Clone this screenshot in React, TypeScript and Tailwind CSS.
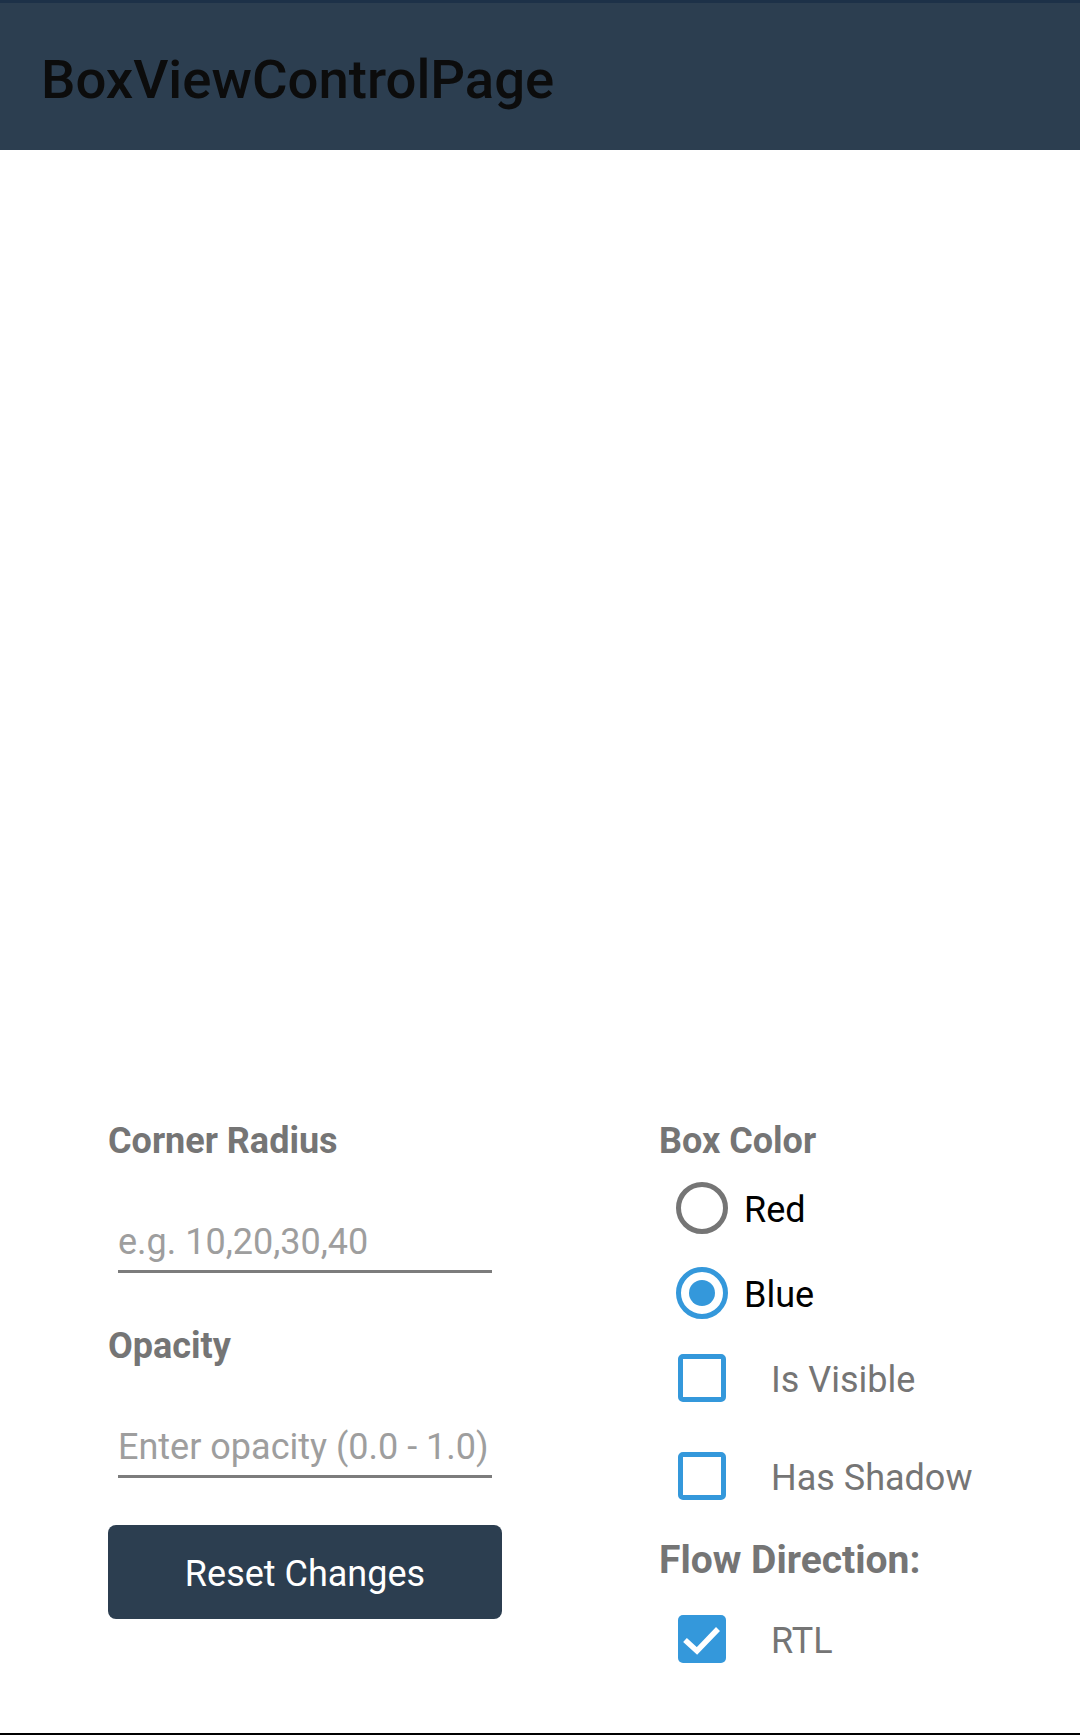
import { useState } from 'react'

// Outline / filled radio circle
function Radio({ checked }: { checked: boolean }) {
  return (
    <span
      className={`flex h-[52px] w-[52px] flex-none items-center justify-center rounded-full border-[5px] ${
        checked ? 'border-[#3498db]' : 'border-[#757575]'
      }`}
    >
      {checked && <span className="h-[26px] w-[26px] rounded-full bg-[#3498db]" />}
    </span>
  )
}

function Check({ checked }: { checked: boolean }) {
  if (checked) {
    return (
      <span className="flex h-[48px] w-[48px] flex-none items-center justify-center rounded-[5px] bg-[#3498db]">
        <svg viewBox="0 0 48 48" className="h-[48px] w-[48px]" fill="none" stroke="#fff" strokeWidth={5.5}>
          <path d="M7 25 L19 36 L40 14" />
        </svg>
      </span>
    )
  }
  return <span className="h-[48px] w-[48px] flex-none rounded-[5px] border-[5px] border-[#3498db]" />
}

function SectionLabel({ text }: { text: string }) {
  return <p className="h-[40px] text-[36px] leading-[40px] font-bold text-[#757575]">{text}</p>
}

function Entry({ placeholder }: { placeholder: string }) {
  return (
    <div className="ml-[10px] mt-[59px] w-[374px] border-b-[3px] border-[#7c7c7c] pb-[6px]">
      <input
        placeholder={placeholder}
        className="h-[44px] w-full bg-transparent text-[36px] text-[#212121] outline-none placeholder:text-[#9e9e9e]"
      />
    </div>
  )
}

export default function App() {
  const [color, setColor] = useState<'red' | 'blue'>('blue')
  const [visible, setVisible] = useState(false)
  const [shadow, setShadow] = useState(false)
  const [rtl, setRtl] = useState(true)

  return (
    <div className="flex h-[1735px] w-[1080px] flex-col bg-white font-['Roboto',sans-serif]">
      {/* Toolbar */}
      <header className="h-[150px] flex-none border-t-[3px] border-[#1d3148] bg-[#2c3e50] pl-[41px] pt-[45px]">
        <h1 className="text-[54.5px] leading-[62px] font-medium text-[#0c0c0c]">BoxViewControlPage</h1>
      </header>

      {/* Controls, pinned to the bottom */}
      <div className="mt-auto flex pb-[70px] pl-[108px]">
        <div className="flex w-[394px] flex-col">
          <SectionLabel text="Corner Radius" />
          <Entry placeholder="e.g. 10,20,30,40" />
          <div className="mt-[53px]">
            <SectionLabel text="Opacity" />
          </div>
          <Entry placeholder="Enter opacity (0.0 - 1.0)" />
          <button className="mt-[47px] h-[94px] w-[394px] rounded-[8px] bg-[#2c3e50] pt-[4px] text-[36px] text-white">
            Reset Changes
          </button>
        </div>

        <div className="ml-[157px] flex flex-col">
          <SectionLabel text="Box Color" />
          <button onClick={() => setColor('red')} className="ml-[17px] mt-[21px] flex h-[52px] items-center gap-[16px]">
            <Radio checked={color === 'red'} />
            <span className="pt-[4px] text-[36px] leading-[44px] text-black">Red</span>
          </button>
          <button onClick={() => setColor('blue')} className="ml-[17px] mt-[33px] flex h-[52px] items-center gap-[16px]">
            <Radio checked={color === 'blue'} />
            <span className="pt-[4px] text-[36px] leading-[44px] text-black">Blue</span>
          </button>
          <button onClick={() => setVisible(!visible)} className="ml-[19px] mt-[35px] flex h-[48px] items-center gap-[45px]">
            <Check checked={visible} />
            <span className="pt-[4px] text-[36px] leading-[44px] text-[#757575]">Is Visible</span>
          </button>
          <button onClick={() => setShadow(!shadow)} className="ml-[19px] mt-[50px] flex h-[48px] items-center gap-[45px]">
            <Check checked={shadow} />
            <span className="pt-[4px] text-[36px] leading-[44px] text-[#757575]">Has Shadow</span>
          </button>
          <p className="mt-[40px] h-[40px] text-[39px] leading-[40px] font-bold text-[#757575]">Flow Direction:</p>
          <button onClick={() => setRtl(!rtl)} className="ml-[19px] mt-[35px] flex h-[48px] items-center gap-[45px]">
            <Check checked={rtl} />
            <span className="pt-[4px] text-[36px] leading-[44px] text-[#757575]">RTL</span>
          </button>
        </div>
      </div>

      <div className="h-[2px] flex-none bg-black" />
    </div>
  )
}
